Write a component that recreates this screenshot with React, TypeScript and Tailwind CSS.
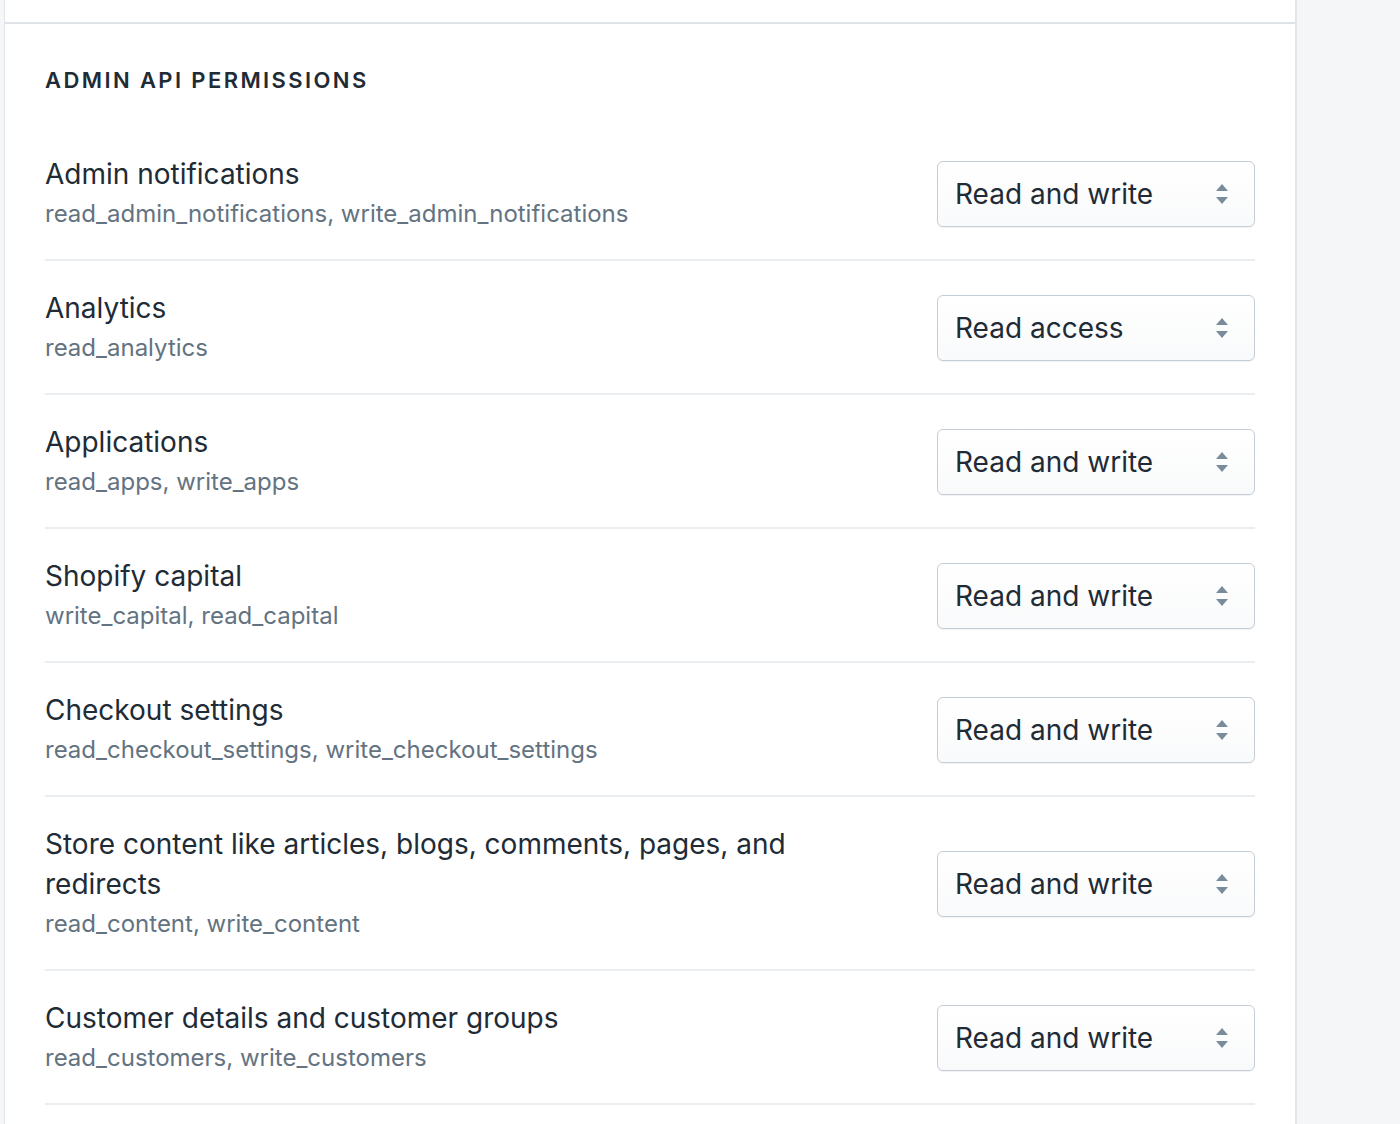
import { useState } from "react";

type Scope = {
  title: string;
  scopes: string;
  access: string;
};

const rows: Scope[] = [
  { title: "Admin notifications", scopes: "read_admin_notifications, write_admin_notifications", access: "Read and write" },
  { title: "Analytics", scopes: "read_analytics", access: "Read access" },
  { title: "Applications", scopes: "read_apps, write_apps", access: "Read and write" },
  { title: "Shopify capital", scopes: "write_capital, read_capital", access: "Read and write" },
  { title: "Checkout settings", scopes: "read_checkout_settings, write_checkout_settings", access: "Read and write" },
  {
    title: "Store content like articles, blogs, comments, pages, and redirects",
    scopes: "read_content, write_content",
    access: "Read and write",
  },
  { title: "Customer details and customer groups", scopes: "read_customers, write_customers", access: "Read and write" },
];

function AccessSelect({ value }: { value: string }) {
  const [v, setV] = useState(value);
  return (
    <div className="relative h-[66px] w-[318px] shrink-0 rounded-[6px] border border-[#c4cdd5] bg-gradient-to-b from-white to-[#f9fafb] shadow-[0_1px_0_rgba(22,29,37,0.05)]">
      <select
        value={v}
        onChange={(e) => setV(e.target.value)}
        className="h-full w-full appearance-none bg-transparent pl-[17px] pr-12 text-[28px] text-[#212b36] outline-none"
      >
        <option>No access</option>
        <option>Read access</option>
        <option>Read and write</option>
      </select>
      {/* up/down caret */}
      <svg
        className="pointer-events-none absolute right-[26px] top-1/2 -translate-y-1/2"
        width="12"
        height="20"
        viewBox="0 0 12 20"
      >
        <path d="M6 0 L12 7 L0 7 Z" fill="#798c9c" />
        <path d="M0 13 L12 13 L6 20 Z" fill="#798c9c" />
      </svg>
    </div>
  );
}

export default function App() {
  return (
    <div
      className="flex min-h-[1124px] bg-[#f4f6f8]"
      style={{ fontFamily: "Inter, 'Noto Sans', sans-serif" }}
    >
      <div className="w-[5px] shrink-0 border-r border-[#e3e6e9]" />

      {/* CARD */}
      <div className="w-[1292px] shrink-0 border-r-2 border-[#e3e6e9] bg-white">
        <div className="h-[24px] border-b-2 border-[#dfe3e8]" />

        <div className="px-10 pt-[40px]">
          <h2 className="text-[22px] font-semibold uppercase leading-[32px] tracking-[2.4px] text-[#212b36]">
            Admin API permissions
          </h2>

          <div className="mt-[31px]">
            {rows.map((r) => (
              <div
                key={r.title}
                className="flex items-center justify-between border-b-2 border-[#ebeef0] pb-[25px] pt-[27px]"
              >
                <div className="max-w-[780px]">
                  <div className="text-[28px] leading-[40px] text-[#212b36]">{r.title}</div>
                  <div className="text-[24px] leading-[40px] text-[#637381]">{r.scopes}</div>
                </div>
                <AccessSelect value={r.access} />
              </div>
            ))}
          </div>
        </div>
      </div>
    </div>
  );
}
